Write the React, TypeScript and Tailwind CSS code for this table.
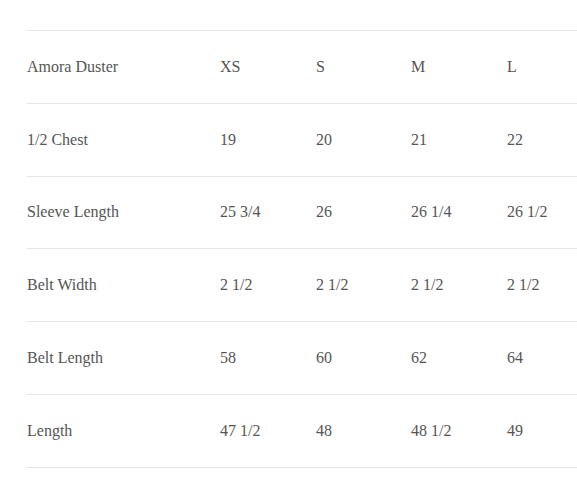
const rows = [
  ["Amora Duster", "XS", "S", "M", "L"],
  ["1/2 Chest", "19", "20", "21", "22"],
  ["Sleeve Length", "25 3/4", "26", "26 1/4", "26 1/2"],
  ["Belt Width", "2 1/2", "2 1/2", "2 1/2", "2 1/2"],
  ["Belt Length", "58", "60", "62", "64"],
  ["Length", "47 1/2", "48", "48 1/2", "49"],
];

export default function App() {
  return (
    <div className="w-[577px] h-[483px] bg-white overflow-hidden pt-[30px] pl-[27px] font-['Liberation_Serif',serif] text-[16px] text-[#555555]">
      <div className="border-b border-[#e6e6e6]">
        {rows.map((row, i) => (
          <div
            key={i}
            className="grid grid-cols-[193px_96px_95px_96px_1fr] items-center h-[72.8px] border-t border-[#e6e6e6]"
          >
            {row.map((cell, j) => (
              <div key={j}>{cell}</div>
            ))}
          </div>
        ))}
      </div>
    </div>
  );
}
